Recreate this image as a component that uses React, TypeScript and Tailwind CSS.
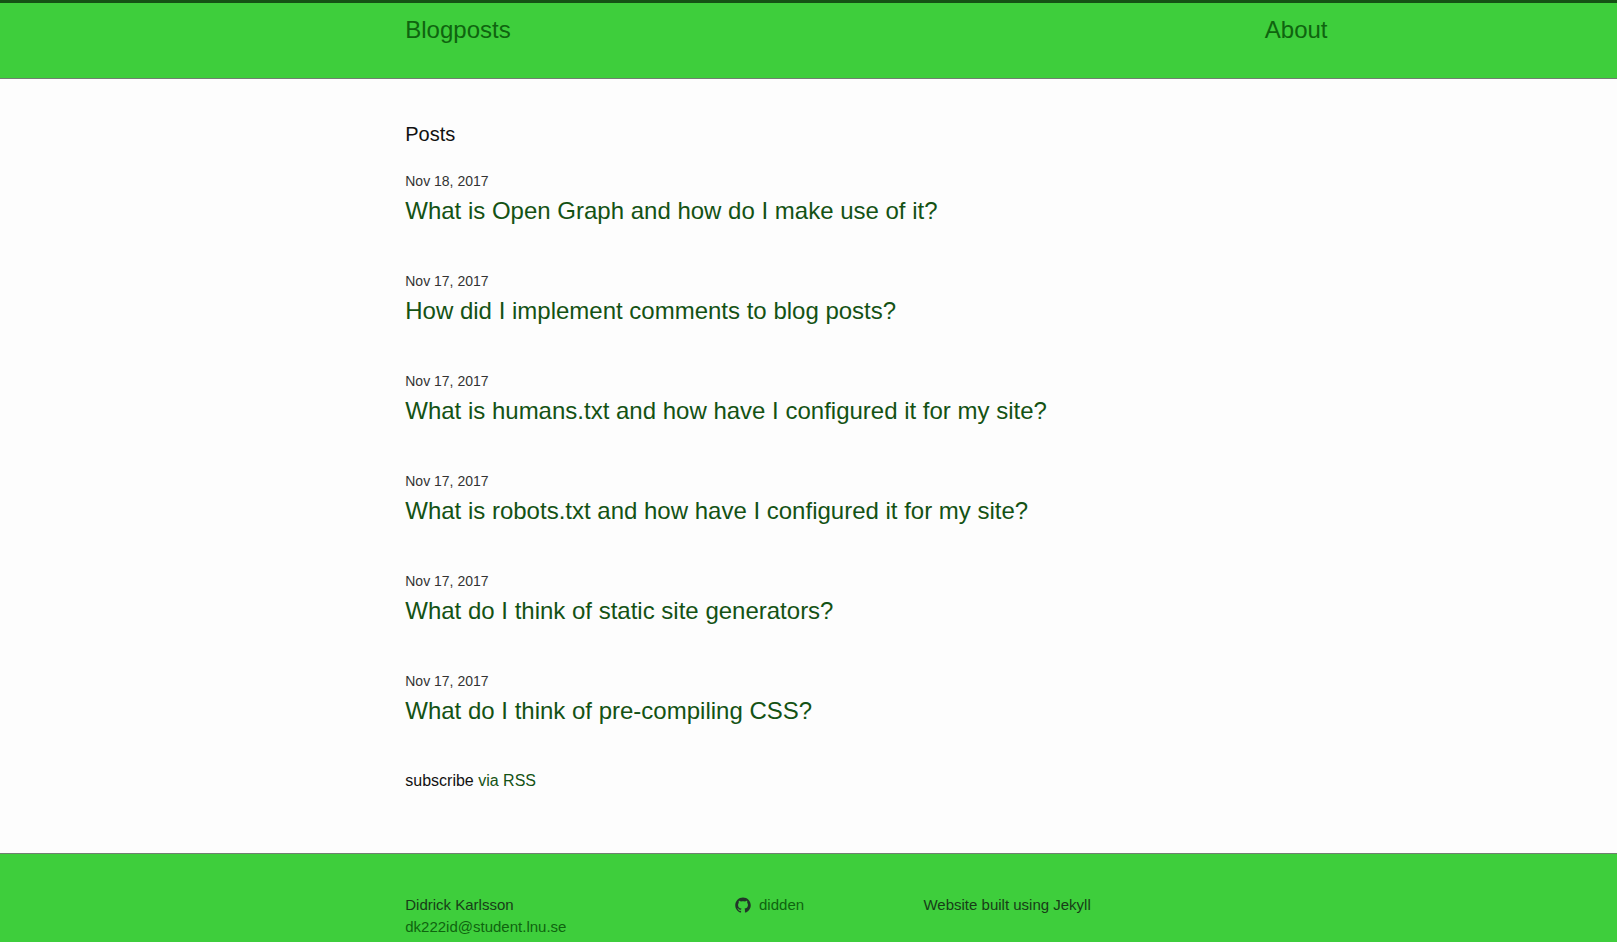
const posts = [
  { date: "Nov 18, 2017", title: "What is Open Graph and how do I make use of it?" },
  { date: "Nov 17, 2017", title: "How did I implement comments to blog posts?" },
  { date: "Nov 17, 2017", title: "What is humans.txt and how have I configured it for my site?" },
  { date: "Nov 17, 2017", title: "What is robots.txt and how have I configured it for my site?" },
  { date: "Nov 17, 2017", title: "What do I think of static site generators?" },
  { date: "Nov 17, 2017", title: "What do I think of pre-compiling CSS?" },
];

function GithubIcon() {
  return (
    <svg viewBox="0 0 16 16" className="size-4 shrink-0" fill="#23362a" aria-hidden="true">
      <path d="M7.999,0.431c-4.285,0-7.76,3.474-7.76,7.761c0,3.428,2.223,6.337,5.307,7.363c0.388,0.071,0.53-0.168,0.53-0.374c0-0.184-0.007-0.672-0.01-1.32c-2.159,0.469-2.614-1.04-2.614-1.04c-0.353-0.896-0.862-1.135-0.862-1.135c-0.705-0.481,0.053-0.472,0.053-0.472c0.779,0.055,1.189,0.8,1.189,0.8c0.692,1.186,1.816,0.843,2.258,0.645c0.071-0.502,0.271-0.843,0.493-1.037C4.86,11.425,3.049,10.76,3.049,7.786c0-0.847,0.302-1.54,0.799-2.082C3.768,5.507,3.501,4.718,3.924,3.65c0,0,0.652-0.209,2.134,0.796C6.677,4.273,7.34,4.187,8,4.184c0.659,0.003,1.323,0.089,1.943,0.261c1.482-1.004,2.132-0.796,2.132-0.796c0.423,1.068,0.157,1.857,0.077,2.054c0.497,0.542,0.798,1.235,0.798,2.082c0,2.981-1.814,3.637-3.543,3.829c0.279,0.24,0.527,0.713,0.527,1.437c0,1.037-0.01,1.874-0.01,2.129c0,0.208,0.14,0.449,0.534,0.373c3.081-1.028,5.302-3.935,5.302-7.362C15.76,3.906,12.285,0.431,7.999,0.431z" />
    </svg>
  );
}

export default function App() {
  return (
    <div className="flex min-h-screen flex-col bg-[#fdfdfd] font-['Liberation_Sans',Arial,sans-serif] text-base text-[#111111]">
      <header className="border-t-3 border-b border-t-[#145214] border-b-[#708070] bg-[#3ece3c] pb-[21px]">
        <nav className="ml-[25%] flex w-7/12 justify-between pr-5 pl-px text-2xl leading-[54px] text-[#0f640f]">
          <a href="#posts">Blogposts</a>
          <a href="#about">About</a>
        </nav>
      </header>

      <main id="posts" className="ml-[25%] w-7/12 pt-10 pb-15 pl-px">
        <h1 className="text-xl leading-[30px]">Posts</h1>
        <ul className="mt-[22px] flex flex-col gap-[42px]">
          {posts.map((post) => (
            <li key={post.title}>
              <time className="mb-0.5 block text-sm leading-5 text-[#333333]">{post.date}</time>
              <h2 className="text-2xl leading-9 text-[#145214]">
                <a href="#posts">{post.title}</a>
              </h2>
            </li>
          ))}
        </ul>
        <p className="mt-10 leading-6">
          subscribe{" "}
          <a href="#rss" className="text-[#145214]">
            via RSS
          </a>
        </p>
      </main>

      <footer className="flex-1 border-t border-[#708070] bg-[#3ece3c] pt-10">
        <div className="ml-[25%] flex w-7/12 pl-px text-[15px] leading-[22px] text-[#173c17]">
          <address className="w-[35%] not-italic">
            <p>Didrick Karlsson</p>
            <a href="mailto:dk222id@student.lnu.se" className="text-[#0f640f]">
              dk222id@student.lnu.se
            </a>
          </address>
          <div className="w-1/5">
            <a href="#github" className="flex items-center gap-2 text-[#0f640f]">
              <GithubIcon />
              didden
            </a>
          </div>
          <p className="w-[45%]">Website built using Jekyll</p>
        </div>
      </footer>
    </div>
  );
}
